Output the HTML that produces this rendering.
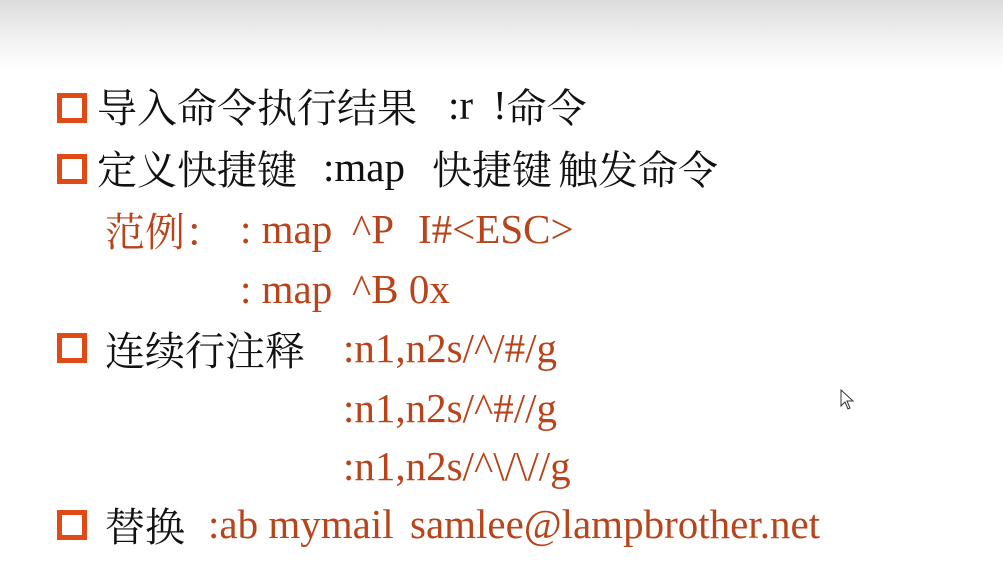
<!DOCTYPE html>
<html><head><meta charset="utf-8"><style>
body{margin:0;width:1003px;height:584px;overflow:hidden;background:#fff;position:relative;font-family:"Liberation Serif","Noto Serif CJK SC",serif;}
.top{position:absolute;left:0;top:0;width:1003px;height:70px;background:linear-gradient(#dcdcdc,#f3f3f3 60%,#fff);}
.l{position:absolute;font-size:41px;line-height:44px;height:44px;white-space:pre;color:#111;}
.c{font-size:40px;position:relative;top:3px;}
.o{color:#b8441b;}
.b{position:absolute;width:20px;height:20px;border:5px solid #e04a17;background:#fff;}
</style></head><body>
<div class="top"></div>
<div class="b" style="left:57px;top:93px"></div>
<div class="l" style="left:97px;top:83px"><span class="c">导入命令执行结果</span></div>
<div class="l" style="left:448px;top:83px">:r</div>
<div class="l" style="left:493px;top:83px">!<span class="c">命令</span></div>
<div class="b" style="left:57px;top:154px"></div>
<div class="l" style="left:97px;top:145px"><span class="c">定义快捷键</span></div>
<div class="l" style="left:323px;top:145px">:map</div>
<div class="l" style="left:432px;top:145px"><span class="c">快捷键</span></div>
<div class="l" style="left:558px;top:145px"><span class="c">触发命令</span></div>
<div class="l o" style="left:105px;top:207px"><span class="c">范例：</span></div>
<div class="l o" style="left:240px;top:207px">: map</div>
<div class="l o" style="left:352px;top:207px">^P</div>
<div class="l o" style="left:418px;top:207px">I#&lt;ESC&gt;</div>
<div class="l o" style="left:240px;top:267px">: map</div>
<div class="l o" style="left:352px;top:267px">^B 0x</div>
<div class="b" style="left:57px;top:333px"></div>
<div class="l" style="left:105px;top:326px"><span class="c">连续行注释</span></div>
<div class="l o" style="left:343px;top:326px">:n1,n2s/^/#/g</div>
<div class="l o" style="left:343px;top:386px">:n1,n2s/^#//g</div>
<div class="l o" style="left:343px;top:444px">:n1,n2s/^\/\//g</div>
<div class="b" style="left:57px;top:510px"></div>
<div class="l" style="left:105px;top:502px"><span class="c">替换</span></div>
<div class="l o" style="left:208px;top:502px">:ab mymail</div>
<div class="l o" style="left:410px;top:502px">samlee@lampbrother.net</div>
<svg style="position:absolute;left:840px;top:389px" width="16" height="22" viewBox="0 0 16 22"><path d="M1 1 L1 17 L5 13 L8 20 L10 19 L7 12 L13 12 Z" fill="#fff" stroke="#333" stroke-width="1"/></svg>
</body></html>
